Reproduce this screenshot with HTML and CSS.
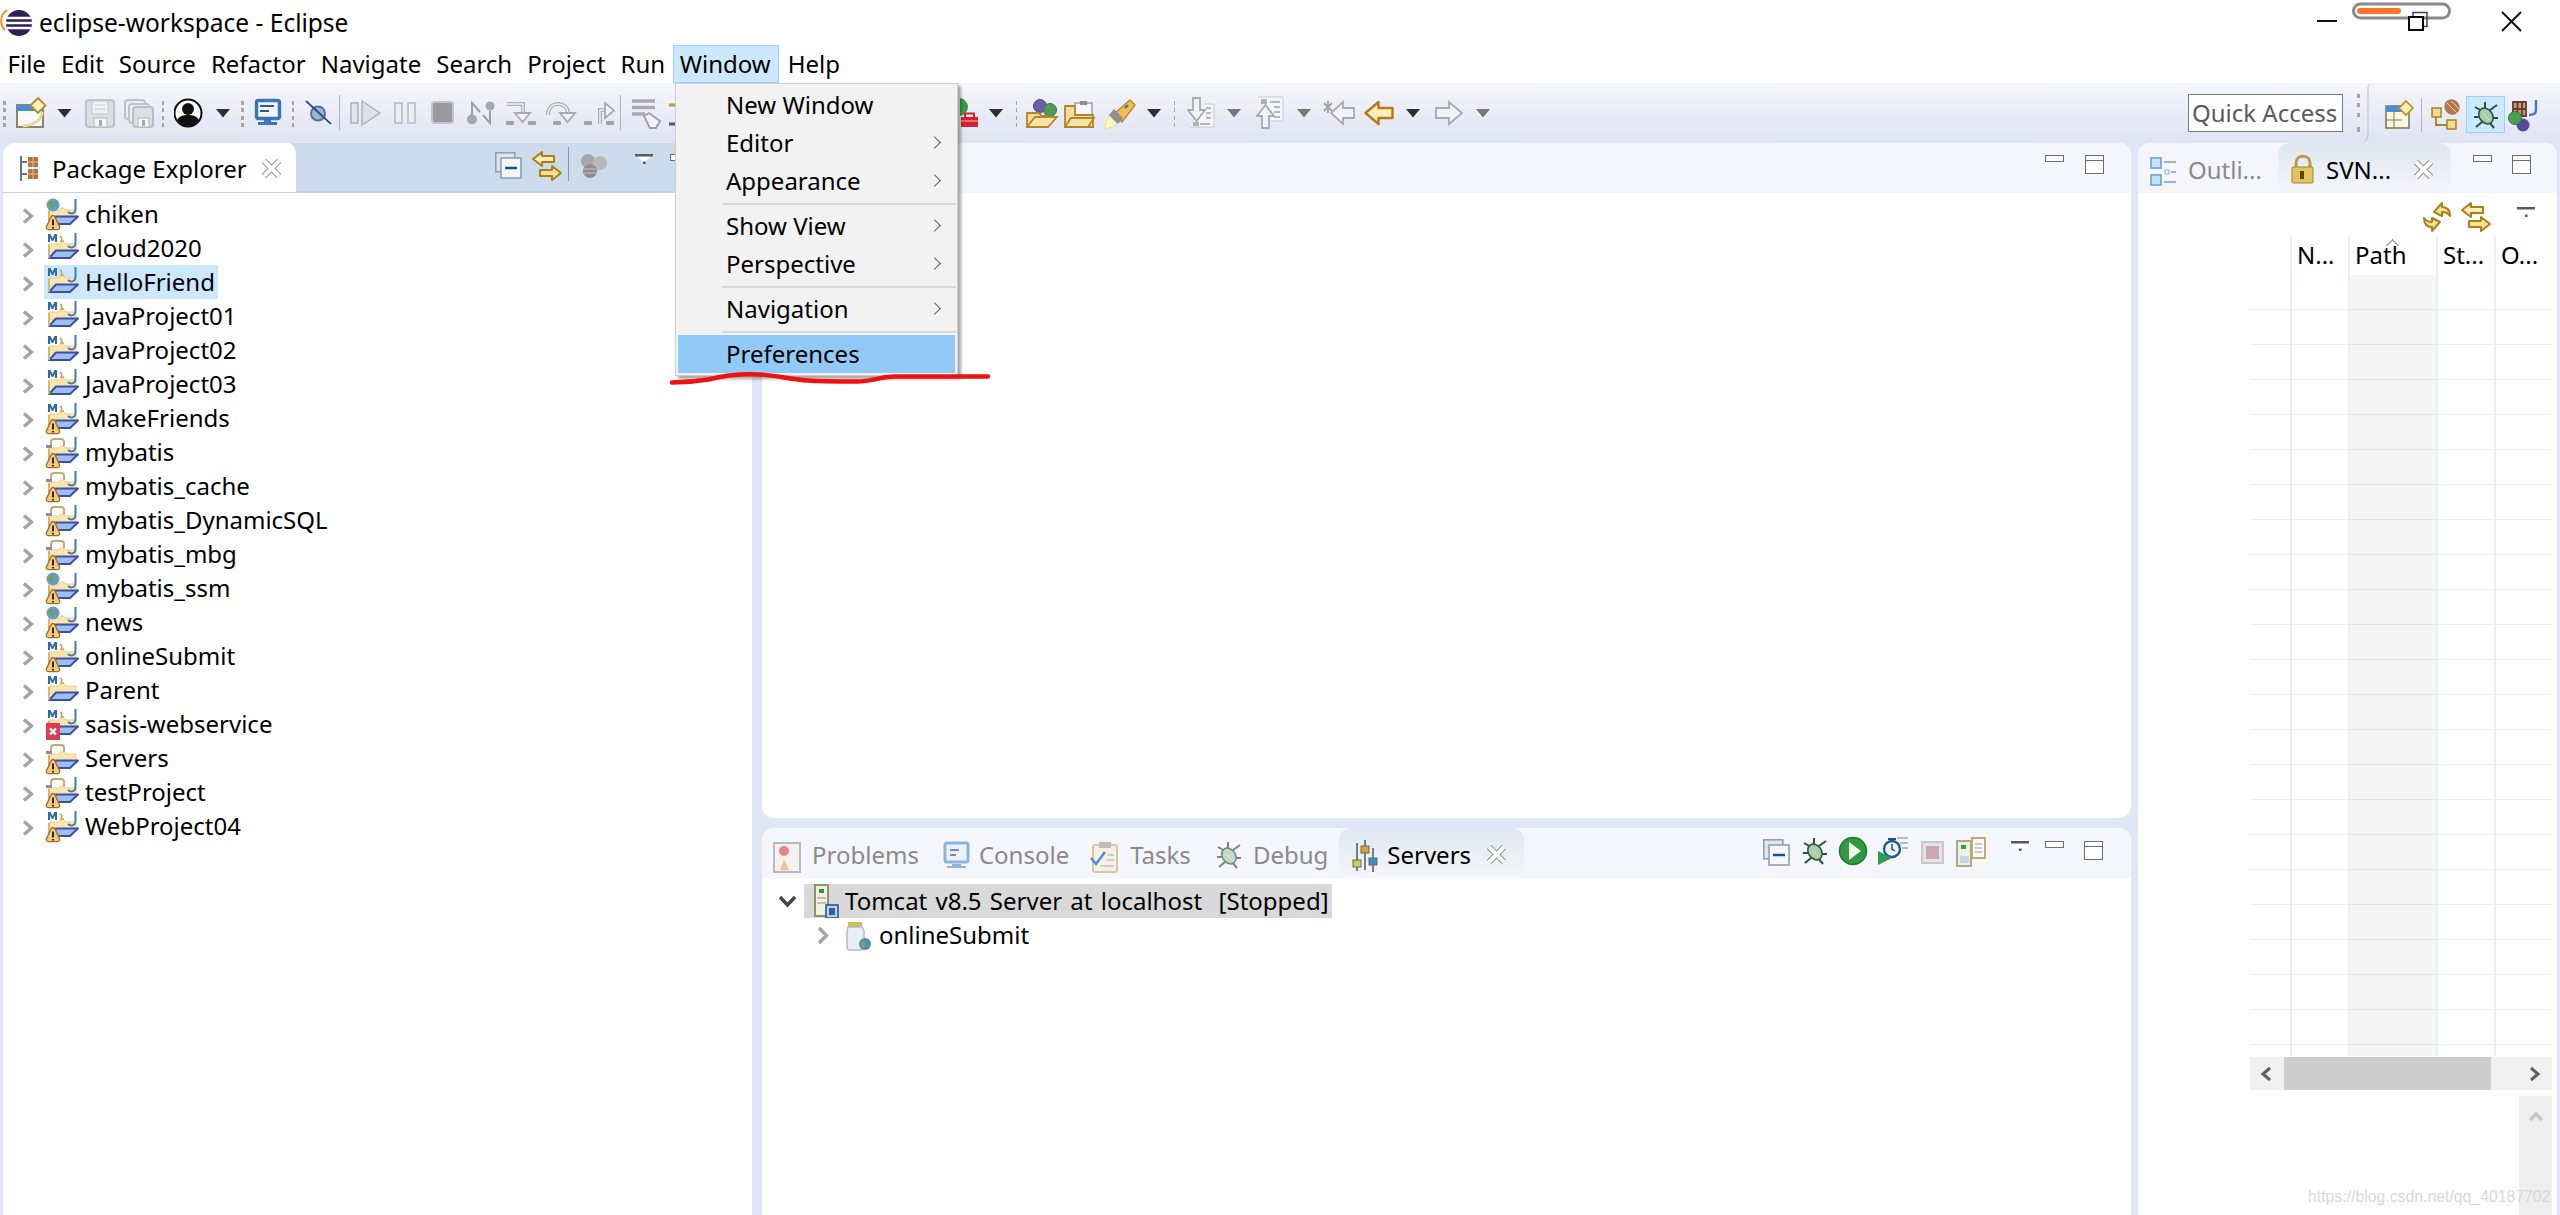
FILE: index.html
```html
<!DOCTYPE html>
<html lang="en">
<head>
<meta charset="utf-8">
<title>eclipse-workspace - Eclipse</title>
<link rel="stylesheet" href="styles.css">
</head>
<body>
<svg class="defs" width="0" height="0" aria-hidden="true">
  <defs>
    <symbol id="chev" viewBox="0 0 12 16"><polyline points="2,1.5 9.5,8 2,14.5" fill="none" stroke="#a4a4a4" stroke-width="3.4"/></symbol>
    <g id="folder">
      <path d="M3 13h9l3-2h2l3 2h10v8H3z" fill="#fbe6ae" stroke="#e8cf93" stroke-width="1"/>
      <path d="M3 27 10 19.500H32L24 27z" fill="#9dc0f0" stroke="#3c4fa6" stroke-width="2" stroke-linejoin="round"/>
      <path d="M3 14v13" stroke="#d4b673" stroke-width="2"/>
    </g>
    <path id="j" d="M29.500 2v10c0 3-2 4.500-4 4.500-1.500 0-2.500-.5-3.500-1.500" fill="none" stroke="#3f7cb4" stroke-width="2"/>
    <g id="m"><path d="M2 11V3h2.500l2 4 2-4H11v8H9V6.500L7.200 10H5.800L4 6.500V11z" fill="#2d6da3"/><path d="M14 5c2 1 2 3 1 5h3" fill="none" stroke="#c9a45c" stroke-width="1.600"/></g>
    <g id="globe"><circle cx="7" cy="8" r="6.500" fill="#5d9fc9"/><path d="M3 5c3-2 5-1 6 1s-2 2-2 5c-3 0-5-3-4-6z" fill="#6f9f5c"/><path d="M9 3c2 1 3 3 3 5l-3-1z" fill="#8a8aa8"/></g>
    <g id="bag"><path d="M5 11V7c0-2 1-3 3-3h7c2 0 3 1 3 3v4" fill="none" stroke="#c5a877" stroke-width="2"/><path d="M0 10h6v3H0z" fill="#8f8aa0"/></g>
    <g id="warn"><path d="M7 18.500c1 0 1.600.7 2 1.600l4.500 9.500c.7 1.700-.3 3-1.800 3H2.300C.8 32.600-.2 31.300.5 29.600L5 20.100c.4-.9 1-1.600 2-1.600z" fill="#f1cc80" stroke="#a96a1c" stroke-width="1.300"/><path d="M7 22.500v6M7 30v1.500" stroke="#2b2b2b" stroke-width="2"/></g>
    <g id="err"><rect x="0" y="16" width="14" height="17" fill="#dc3c50"/><path d="M4 21.500l6 6M10 21.500l-6 6" stroke="#fff" stroke-width="2.400"/></g>
    <g id="grip" fill="#aaa49a"><rect x="0" y="3" width="3" height="4"/><rect x="0" y="10" width="3" height="4"/><rect x="0" y="18" width="3" height="4"/><rect x="0" y="25" width="3" height="4"/></g>
    <path id="arr" d="M0 0h14l-7 8.500z" fill="#2e2e2e"/>
    <path id="arrg" d="M0 0h14l-7 8.500z" fill="#777"/>
    <g id="xclose" fill="none"><path d="M2 2l15 15M17 2L2 17" stroke="#7e7e7e" stroke-width="6"/><path d="M2 2l15 15M17 2L2 17" stroke="#fff" stroke-width="4.200"/></g>
    <g id="collapse"><rect x=".8" y=".8" width="19" height="19" fill="#dfe6f0" stroke="#8ea0b5" stroke-width="1.600"/><rect x="6" y="6" width="20" height="20" fill="#f4f8fc" stroke="#8ea0b5" stroke-width="1.600"/><path d="M10 16h12" stroke="#14558f" stroke-width="2.600"/></g>
    <g id="link" stroke="#b07e16" stroke-width="2" stroke-linejoin="round"><path d="M1 8l9-7v4h12v6H10v4z" fill="#fbeeb8"/><path d="M29 22l-9-7v4H8v6h12v4z" fill="#f8e39b"/></g>
    <g id="vmenu"><path d="M2 2h14l-7 7z" fill="#fff"/><path d="M0 0h18v2.500H0z" fill="#5a5a5a"/><rect x="8" y="7.500" width="2.500" height="2.500" fill="#5a5a5a"/></g>
    <g id="minb"><rect x=".5" y=".5" width="18" height="6" fill="#fff" stroke="#6d6d6d"/></g>
    <g id="maxb"><rect x=".5" y=".5" width="18" height="18" fill="#fff" stroke="#6d6d6d"/><path d="M0 5.500h19" stroke="#6d6d6d"/></g>
    <g id="bug"><path d="M1 5l7 4M23 3l-7 5M0 15h6M24 16h-6M2 25l6-5M20 26l-5-6M11 0v6" stroke="#274f44" stroke-width="2" fill="none"/><ellipse cx="12" cy="14" rx="6.500" ry="8.500" fill="#a9cda6" stroke="#274f44" stroke-width="1.500" transform="rotate(-35 12 14)"/><path d="M9 12l6 6" stroke="#d5e8c0"/></g>
    <g id="dash"><rect width="8" height="4" rx="1" fill="#a0a2a8"/></g>
  </defs>
</svg>

<div class="window">
  <header class="titlebar">
    <svg class="tlogo" width="39" height="45" viewBox="0 0 39 45"><circle cx="19" cy="23" r="13" fill="#2c2255"/><path d="M7 10a13 13 0 0 0-2 20" fill="none" stroke="#f7941e" stroke-width="2"/><path d="M7 18h24M6 23h26M7 28h24" stroke="#fff" stroke-width="2.400"/></svg>
    <span class="ttext">eclipse-workspace - Eclipse</span>
    <svg class="wctl" width="250" height="45" viewBox="2310 0 250 45">
      <path d="M2317 21h20" stroke="#111" stroke-width="2"/>
      <rect x="2353.500" y="4" width="96" height="14" rx="7" fill="#fff" stroke="#8a8a8a" stroke-width="3"/>
      <rect x="2357" y="8" width="44" height="6" rx="3" fill="#fb7524"/>
      <rect x="2413" y="12.500" width="14" height="14" fill="none" stroke="#444" stroke-width="1.500"/>
      <rect x="2409" y="17" width="14" height="13" fill="#fff" stroke="#000" stroke-width="2"/>
      <path d="M2502 12l19 19M2521 12l-19 19" stroke="#111" stroke-width="2"/>
    </svg>
  </header>

  <nav class="menubar">
    <span class="mi">File</span><span class="mi">Edit</span><span class="mi">Source</span><span class="mi">Refactor</span><span class="mi">Navigate</span><span class="mi">Search</span><span class="mi">Project</span><span class="mi">Run</span><span class="mi active">Window</span><span class="mi">Help</span>
  </nav>

  <div class="toolbar">
    <svg width="16" height="36" viewBox="0 94 16 36"><use href="#grip" x="3" y="98"/></svg>
    <svg width="41" height="36" viewBox="16 94 41 36"><rect x="17" y="105" width="26" height="22" fill="#f6f8fd" stroke="#8a8668" stroke-width="2"/><rect x="17" y="105" width="26" height="6" fill="#4a8ecf"/><path d="M42 112c0 8-8 13-19 14" fill="none" stroke="#f0d98f" stroke-width="3"/><path d="M38 98l7.500 7.500-7.500 7.500-7.500-7.500z" fill="#fdf3c4" stroke="#b98a1f" stroke-width="1.800"/></svg>
    <svg width="28" height="36" viewBox="57 94 28 36"><use href="#arr" x="57.500" y="109"/></svg>
    <svg width="39" height="36" viewBox="85 94 39 36"><rect x="86" y="100" width="28" height="27" rx="3" fill="#dcdee3" stroke="#c0c1c5" stroke-width="2"/><rect x="92" y="101" width="16" height="13" fill="#eef0f4" stroke="#c5c6cb"/><path d="M95 105h10M95 109h10" stroke="#c8c9ce"/><rect x="94" y="118" width="13" height="9" fill="#f4f5f8" stroke="#b7b9bf"/><rect x="99" y="120" width="3" height="6" fill="#a8a8ac"/></svg>
    <svg width="38" height="36" viewBox="124 94 38 36"><rect x="125" y="100" width="20" height="19" rx="3" fill="#eceef3" stroke="#c0c1c5" stroke-width="2"/><rect x="129" y="104" width="20" height="19" rx="3" fill="#eceef3" stroke="#c0c1c5" stroke-width="2"/><rect x="133" y="107" width="20" height="20" rx="3" fill="#dcdee3" stroke="#bbbcc1" stroke-width="2"/><rect x="138" y="118" width="11" height="9" fill="#f4f5f8" stroke="#b7b9bf"/><rect x="142" y="120" width="3" height="6" fill="#a8a8ac"/></svg>
    <svg width="12" height="36" viewBox="162 94 12 36"><use href="#grip" x="161" y="98"/></svg>
    <svg width="42" height="36" viewBox="174 94 42 36"><circle cx="188" cy="113" r="13.500" fill="#fff" stroke="#111" stroke-width="2"/><circle cx="188" cy="109" r="6" fill="#111"/><path d="M177 120c2-4 6-5 11-5s9 1 11 5c-3 4-7 6-11 6s-8-2-11-6z" fill="#111"/></svg>
    <svg width="25" height="36" viewBox="216 94 25 36"><use href="#arr" x="216" y="109"/></svg>
    <svg width="13" height="36" viewBox="241 94 13 36"><use href="#grip" x="241" y="98"/></svg>
    <svg width="38" height="36" viewBox="254 94 38 36"><rect x="256.500" y="100.500" width="23" height="18" rx="2" fill="#f2f5fa" stroke="#3a76b8" stroke-width="3.400"/><path d="M260 106h14M260 111h9" stroke="#2c5f96" stroke-width="2"/><path d="M264 120h7v2h6v3h-19v-3h6z" fill="#3a76b8"/></svg>
    <svg width="13" height="36" viewBox="292 94 13 36"><use href="#grip" x="291" y="98"/></svg>
    <svg width="45" height="36" viewBox="305 94 45 36"><path d="M306 101l25 23" stroke="#fff" stroke-width="4"/><circle cx="318" cy="113.500" r="7" fill="#9bb7d4" stroke="#5f6f8c" stroke-width="2"/><path d="M306 101l25 23" stroke="#2d4f97" stroke-width="2"/><path d="M339.500 95v36" stroke="#adb2bf"/></svg>
    <svg width="44" height="36" viewBox="350 94 44 36"><rect x="351" y="103" width="7" height="20" fill="#e2e4ea" stroke="#aeb1ba" stroke-width="1.500"/><path d="M362 101l18 12-18 12z" fill="#dfe1e8" stroke="#aeb1ba" stroke-width="1.500"/></svg>
    <svg width="37" height="36" viewBox="394 94 37 36"><rect x="395" y="103" width="7" height="20" fill="#eceef2" stroke="#b6b9c1" stroke-width="1.500"/><rect x="408" y="103" width="7" height="20" fill="#eceef2" stroke="#b6b9c1" stroke-width="1.500"/></svg>
    <svg width="36" height="36" viewBox="431 94 36 36"><rect x="432" y="102" width="21" height="21" rx="3" fill="#9a9a9e" stroke="#c2c3c8" stroke-width="2"/></svg>
    <svg width="39" height="36" viewBox="467 94 39 36"><circle cx="472" cy="119.500" r="5" fill="#a8a8ac"/><circle cx="490" cy="106" r="4.500" fill="#a8a8ac"/><path d="M472 115v-12l8 9M483 115l7 8v-12" fill="none" stroke="#9d9da2" stroke-width="2"/></svg>
    <svg width="39" height="36" viewBox="506 94 39 36"><path d="M507 104h16v9" fill="none" stroke="#aeb0b6" stroke-width="4"/><path d="M507 104h16v9" fill="none" stroke="#f0f1f4" stroke-width="1.400"/><path d="M515 113h15l-7.500 9z" fill="#f2f3f6" stroke="#a8aab0" stroke-width="1.800"/><use href="#dash" x="506" y="121"/><use href="#dash" x="528" y="121"/></svg>
    <svg width="39" height="36" viewBox="545 94 39 36"><path d="M548 115c0-7 4-11 10-11s10 4 10 9" fill="none" stroke="#aeb0b6" stroke-width="4"/><path d="M548 115c0-7 4-11 10-11s10 4 10 9" fill="none" stroke="#f0f1f4" stroke-width="1.400"/><path d="M560 113h15l-7.500 9z" fill="#f2f3f6" stroke="#a8aab0" stroke-width="1.800"/><use href="#dash" x="553" y="121"/></svg>
    <svg width="47" height="36" viewBox="584 94 47 36"><path d="M600 124v-14h6" fill="none" stroke="#aeb0b6" stroke-width="4"/><path d="M600 124v-14h6" fill="none" stroke="#f0f1f4" stroke-width="1.400"/><path d="M605 103l9 7.500-9 7.500z" fill="#f2f3f6" stroke="#a8aab0" stroke-width="1.800"/><use href="#dash" x="584" y="121"/><use href="#dash" x="606" y="121"/><path d="M620.500 95v36" stroke="#adb2bf"/></svg>
    <svg width="37" height="36" viewBox="631 94 37 36"><path d="M632 101h23M632 107.500h23M632 114h13" stroke="#a8aab0" stroke-width="3.500"/><path d="M644 116l5-3 11 8-4 7h-6z" fill="#f2f3f6" stroke="#9da0a7" stroke-width="1.800"/></svg>
    <svg width="292" height="36" viewBox="668 94 292 36"><path d="M669 105h6" stroke="#c49b3c" stroke-width="3"/><path d="M669 124h6" stroke="#3a5f90" stroke-width="3"/></svg>
    <svg width="29" height="36" viewBox="960 94 29 36"><circle cx="959" cy="107" r="9" fill="#3a9a46"/><rect x="961" y="117" width="17" height="10" fill="#d6212f"/><rect x="965" y="113.500" width="9" height="5" fill="none" stroke="#d6212f" stroke-width="2"/><path d="M961 121h17" stroke="#f9b4b4"/></svg>
    <svg width="27" height="36" viewBox="989 94 27 36"><use href="#arr" x="989" y="109"/></svg>
    <svg width="10" height="36" viewBox="1016 94 10 36"><use href="#grip" x="1014" y="98"/></svg>
    <svg width="38" height="36" viewBox="1026 94 38 36"><circle cx="1040" cy="106" r="6.500" fill="#6d5fa8" stroke="#4a3f80"/><circle cx="1050" cy="110" r="6.500" fill="#4f9b57" stroke="#2f7a39"/><path d="M1027 127v-14h12l3 3h6v11z" fill="#f7dc9b" stroke="#b5842a" stroke-width="1.800"/><path d="M1027 127l8-10h22l-9 10z" fill="#fbe3a8" stroke="#b5842a" stroke-width="1.800"/></svg>
    <svg width="40" height="36" viewBox="1064 94 40 36"><rect x="1075" y="103" width="17" height="12" fill="#f5f7fb" stroke="#9aa3b0" stroke-width="1.500"/><rect x="1080" y="101" width="7" height="4" fill="#8a8f99"/><path d="M1065 127v-21h10v9h18v12z" fill="#f7dc9b" stroke="#b5842a" stroke-width="1.800"/><path d="M1065 127l6-9h23l-6 9z" fill="#fbe3a8" stroke="#b5842a" stroke-width="1.800"/></svg>
    <svg width="43" height="36" viewBox="1104 94 43 36"><path d="M1130 100l5 5-13 17-8-8z" fill="#f2bf55" stroke="#c08a2a" stroke-width="1.500"/><path d="M1114 109l9 9-5 6-9-9z" fill="#8f8f92"/><path d="M1109 116l8 8c-4 3-8 4-12 5 0-5 1-9 4-13z" fill="#fff6c0" stroke="#f0dc90"/><path d="M1125 108l3-3" stroke="#3a6fb0" stroke-width="2.400"/></svg>
    <svg width="27" height="36" viewBox="1147 94 27 36"><use href="#arr" x="1147" y="109"/></svg>
    <svg width="13" height="36" viewBox="1174 94 13 36"><use href="#grip" x="1172" y="98"/></svg>
    <svg width="40" height="36" viewBox="1187 94 40 36"><path d="M1204 104h10v23h-24" fill="#f4f5f8" stroke="#c8cad0"/><path d="M1206 108h5M1206 113h5M1206 118h5M1200 124h10" stroke="#b4b6bc" stroke-width="2"/><rect x="1193" y="122" width="6" height="4" fill="#aeb0b6"/><path d="M1193 98h7v12h5l-8.500 11-8.500-11h5z" fill="#f2f3f6" stroke="#a8aab0" stroke-width="1.800"/></svg>
    <svg width="29" height="36" viewBox="1227 94 29 36"><use href="#arrg" x="1227" y="109"/></svg>
    <svg width="41" height="36" viewBox="1256 94 41 36"><path d="M1258 97h25v24h-12" fill="#f4f5f8" stroke="#c8cad0"/><path d="M1270 102h10M1274 107h6M1274 112h6M1274 117h6" stroke="#b4b6bc" stroke-width="2"/><rect x="1261" y="99" width="6" height="5" fill="#aeb0b6"/><path d="M1262 128v-12h-5l8.500-11 8.500 11h-5v12z" fill="#f2f3f6" stroke="#a8aab0" stroke-width="1.800"/></svg>
    <svg width="26" height="36" viewBox="1297 94 26 36"><use href="#arrg" x="1297" y="109"/></svg>
    <svg width="41" height="36" viewBox="1323 94 41 36"><path d="M1331 113l12-11v6h11v10h-11v6z" fill="#f2f3f6" stroke="#a8aab0" stroke-width="1.800"/><path d="M1324 103l8 8M1332 103l-8 8M1328 101v12" stroke="#a0a2a8" stroke-width="1.800"/></svg>
    <svg width="42" height="36" viewBox="1364 94 42 36"><path d="M1365.500 113l13-11v6h14v10h-14v6z" fill="#fdf0b8" stroke="#b8791a" stroke-width="2.400" stroke-linejoin="round"/></svg>
    <svg width="29" height="36" viewBox="1406 94 29 36"><use href="#arr" x="1406" y="109"/></svg>
    <svg width="41" height="36" viewBox="1435 94 41 36"><path d="M1462 113l-13-11v6h-13v10h13v6z" fill="#f2f3f6" stroke="#a8aab0" stroke-width="1.800"/></svg>
    <svg width="30" height="36" viewBox="1476 94 30 36"><use href="#arrg" x="1476" y="109"/></svg>
    <div class="quick">Quick Access</div>
    <svg class="persp" width="200" height="59" viewBox="2350 83 200 59">
      <rect x="2357" y="94" width="3" height="4" fill="#aaa49a"/><rect x="2357" y="103" width="3" height="4" fill="#aaa49a"/><rect x="2357" y="113" width="3" height="4" fill="#aaa49a"/><rect x="2357" y="127" width="3" height="5" fill="#aaa49a"/>
      <path d="M2370 84c-2 2-2 3-2 5v46c0 3-1 5-3 6" fill="none" stroke="#b8bdca"/>
      <rect x="2386" y="106" width="23" height="22" fill="#fff8df" stroke="#7d7a5c" stroke-width="1.600"/><rect x="2386" y="106" width="23" height="6" fill="#4a8ecf"/><path d="M2394 112v16M2386 120h16" stroke="#7d7a5c"/><path d="M2406 101l7 7-7 7-7-7z" fill="#fbeeb5" stroke="#b98a1f" stroke-width="1.600"/>
      <path d="M2421.500 98v34" stroke="#adb2bf"/>
      <rect x="2432" y="108" width="9" height="9" fill="#f5d98c" stroke="#a88125" stroke-width="1.500"/><rect x="2447" y="120" width="9" height="9" fill="#f5d98c" stroke="#a88125" stroke-width="1.500"/><path d="M2436 117v8h11" fill="none" stroke="#a88125" stroke-width="1.800"/><ellipse cx="2452" cy="107" rx="7.500" ry="8" fill="#b07a4e" transform="rotate(-40 2452 107)"/><path d="M2447 103l10 10M2451 101l8 8" stroke="#e8c9a8"/>
      <rect x="2466.500" y="96.500" width="38" height="36" fill="#cce8ff" stroke="#99d1ff"/>
      <use href="#bug" x="2474" y="102"/>
      <path d="M2513 102h13v14h-13zM2517.500 102v14M2522 102v14M2513 109h13" fill="#c89a7e" stroke="#6a3b2a" stroke-width="1.800"/>
      <path d="M2536 100v10c0 3-2 5-7 5" fill="none" stroke="#3f7cb4" stroke-width="2.400"/>
      <circle cx="2523" cy="125" r="6.500" fill="#56489a"/><circle cx="2515" cy="118" r="6.500" fill="#4aa156" stroke="#2f7a39"/>
    </svg>
  </div>

  <main class="workbench">
    <section class="panel left">
      <div class="phead blue">
        <div class="tab first">
          <svg width="49" height="50" viewBox="3 143 49 50"><path d="M21 157v25M21 163h6M21 175h6" stroke="#6b7280" stroke-width="2" fill="none"/><rect x="28" y="158" width="10" height="10" fill="#b5733d"/><rect x="28" y="170" width="10" height="10" fill="#b5733d"/><path d="M33 158v10M28 163h10M33 170v10M28 175h10" stroke="#eec694"/></svg>
          <span class="tabt">Package Explorer</span>
          <svg class="push" width="44" height="50" viewBox="252 143 44 50"><use href="#xclose" x="262" y="160"/></svg>
        </div>
        <svg class="tools" width="190" height="50" viewBox="490 143 190 50">
          <use href="#collapse" x="495" y="153"/>
          <use href="#link" x="532" y="152"/>
          <path d="M568.500 148v34" stroke="#8a94a4"/>
          <circle cx="588" cy="162" r="7" fill="#a8a8a8"/><circle cx="600" cy="164" r="7" fill="#b8b8b8"/><circle cx="590" cy="172" r="7" fill="#8e8e8e"/><path d="M584 170h12M584 174h12" stroke="#c4c4c4"/>
          <use href="#vmenu" x="635" y="155"/>
          <rect x="670.500" y="155.500" width="18" height="6" fill="#fff" stroke="#6d6d6d"/>
        </svg>
      </div>
      <div class="tree">
        <div class="row"><svg class="cv"><use href="#chev" x="19" y="11" width="12" height="16"/></svg><div class="node"><svg class="ic" viewBox="-2 0 41 34"><use href="#folder"/><use href="#globe"/><use href="#j"/><use href="#warn"/></svg><span>chiken</span></div></div>
        <div class="row"><svg class="cv"><use href="#chev" x="19" y="11" width="12" height="16"/></svg><div class="node"><svg class="ic" viewBox="-2 0 41 34"><use href="#folder"/><use href="#m"/><use href="#j"/></svg><span>cloud2020</span></div></div>
        <div class="row"><svg class="cv"><use href="#chev" x="19" y="11" width="12" height="16"/></svg><div class="node sel"><svg class="ic" viewBox="-2 0 41 34"><use href="#folder"/><use href="#m"/><use href="#j"/></svg><span>HelloFriend</span></div></div>
        <div class="row"><svg class="cv"><use href="#chev" x="19" y="11" width="12" height="16"/></svg><div class="node"><svg class="ic" viewBox="-2 0 41 34"><use href="#folder"/><use href="#m"/><use href="#j"/></svg><span>JavaProject01</span></div></div>
        <div class="row"><svg class="cv"><use href="#chev" x="19" y="11" width="12" height="16"/></svg><div class="node"><svg class="ic" viewBox="-2 0 41 34"><use href="#folder"/><use href="#m"/><use href="#j"/></svg><span>JavaProject02</span></div></div>
        <div class="row"><svg class="cv"><use href="#chev" x="19" y="11" width="12" height="16"/></svg><div class="node"><svg class="ic" viewBox="-2 0 41 34"><use href="#folder"/><use href="#m"/><use href="#j"/></svg><span>JavaProject03</span></div></div>
        <div class="row"><svg class="cv"><use href="#chev" x="19" y="11" width="12" height="16"/></svg><div class="node"><svg class="ic" viewBox="-2 0 41 34"><use href="#folder"/><use href="#m"/><use href="#j"/><use href="#warn"/></svg><span>MakeFriends</span></div></div>
        <div class="row"><svg class="cv"><use href="#chev" x="19" y="11" width="12" height="16"/></svg><div class="node"><svg class="ic" viewBox="-2 0 41 34"><use href="#folder"/><use href="#bag"/><use href="#j"/><use href="#warn"/></svg><span>mybatis</span></div></div>
        <div class="row"><svg class="cv"><use href="#chev" x="19" y="11" width="12" height="16"/></svg><div class="node"><svg class="ic" viewBox="-2 0 41 34"><use href="#folder"/><use href="#bag"/><use href="#j"/><use href="#warn"/></svg><span>mybatis_cache</span></div></div>
        <div class="row"><svg class="cv"><use href="#chev" x="19" y="11" width="12" height="16"/></svg><div class="node"><svg class="ic" viewBox="-2 0 41 34"><use href="#folder"/><use href="#bag"/><use href="#j"/><use href="#warn"/></svg><span>mybatis_DynamicSQL</span></div></div>
        <div class="row"><svg class="cv"><use href="#chev" x="19" y="11" width="12" height="16"/></svg><div class="node"><svg class="ic" viewBox="-2 0 41 34"><use href="#folder"/><use href="#bag"/><use href="#j"/><use href="#warn"/></svg><span>mybatis_mbg</span></div></div>
        <div class="row"><svg class="cv"><use href="#chev" x="19" y="11" width="12" height="16"/></svg><div class="node"><svg class="ic" viewBox="-2 0 41 34"><use href="#folder"/><use href="#globe"/><use href="#j"/><use href="#warn"/></svg><span>mybatis_ssm</span></div></div>
        <div class="row"><svg class="cv"><use href="#chev" x="19" y="11" width="12" height="16"/></svg><div class="node"><svg class="ic" viewBox="-2 0 41 34"><use href="#folder"/><use href="#globe"/><use href="#j"/><use href="#warn"/></svg><span>news</span></div></div>
        <div class="row"><svg class="cv"><use href="#chev" x="19" y="11" width="12" height="16"/></svg><div class="node"><svg class="ic" viewBox="-2 0 41 34"><use href="#folder"/><use href="#m"/><use href="#j"/><use href="#warn"/></svg><span>onlineSubmit</span></div></div>
        <div class="row"><svg class="cv"><use href="#chev" x="19" y="11" width="12" height="16"/></svg><div class="node"><svg class="ic" viewBox="-2 0 41 34"><use href="#folder"/><use href="#m"/></svg><span>Parent</span></div></div>
        <div class="row"><svg class="cv"><use href="#chev" x="19" y="11" width="12" height="16"/></svg><div class="node"><svg class="ic" viewBox="-2 0 41 34"><use href="#folder"/><use href="#m"/><use href="#j"/><use href="#err"/></svg><span>sasis-webservice</span></div></div>
        <div class="row"><svg class="cv"><use href="#chev" x="19" y="11" width="12" height="16"/></svg><div class="node"><svg class="ic" viewBox="-2 0 41 34"><use href="#folder"/><use href="#bag"/><use href="#warn"/></svg><span>Servers</span></div></div>
        <div class="row"><svg class="cv"><use href="#chev" x="19" y="11" width="12" height="16"/></svg><div class="node"><svg class="ic" viewBox="-2 0 41 34"><use href="#folder"/><use href="#bag"/><use href="#j"/><use href="#warn"/></svg><span>testProject</span></div></div>
        <div class="row"><svg class="cv"><use href="#chev" x="19" y="11" width="12" height="16"/></svg><div class="node"><svg class="ic" viewBox="-2 0 41 34"><use href="#folder"/><use href="#m"/><use href="#j"/><use href="#warn"/></svg><span>WebProject04</span></div></div>
      </div>
    </section>

    <div class="midcol">
      <section class="panel editor">
        <div class="phead pale">
          <svg class="push" width="91" height="50" viewBox="2040 143 91 50"><use href="#minb" x="2045" y="155"/><use href="#maxb" x="2085" y="155"/></svg>
        </div>
      </section>
      <section class="panel bottom">
        <div class="phead pale">
          <svg width="50" height="50" viewBox="762 828 50 50"><rect x="774" y="843" width="26" height="29" fill="#f5f1ee" stroke="#b8b8c0" stroke-width="2"/><circle cx="784" cy="851" r="5" fill="#e4868a"/><path d="M780 870l4-11 5 11z" fill="#f0c58c"/></svg>
          <span class="tabt off">Problems</span>
          <svg width="60" height="50" viewBox="918 828 60 50"><rect x="944" y="843" width="23" height="19" rx="2" fill="#eef2f8" stroke="#8eb4dc" stroke-width="3"/><path d="M949 850h9M949 855h6" stroke="#6a8fb6" stroke-width="2"/><path d="M951 864h9v2h5v2h-19v-2h5z" fill="#8eb4dc"/></svg>
          <span class="tabt off">Console</span>
          <svg width="61" height="50" viewBox="1068 828 61 50"><rect x="1092" y="845" width="24" height="27" rx="2" fill="#f7efe2" stroke="#d8c6a8" stroke-width="2"/><rect x="1098" y="842" width="12" height="6" fill="#bcbcc0"/><path d="M1090 858l5 6 9-12" fill="none" stroke="#4a90d8" stroke-width="2.500"/><path d="M1106 855h7M1106 860h7M1100 866h13" stroke="#a8a8a8"/></svg>
          <span class="tabt off">Tasks</span>
          <svg width="62" height="50" viewBox="1189 828 62 50"><g opacity=".65"><use href="#bug" x="1215" y="842"/></g></svg>
          <span class="tabt off">Debug</span>
          <div class="tab serv">
            <svg width="48" height="50" viewBox="1338 828 48 50"><path d="M1356 843v28M1364 840v30M1372 848v24" stroke="#555" stroke-width="1.500"/><rect x="1352" y="860" width="8" height="7" fill="#d2d24a" stroke="#666"/><rect x="1360" y="846" width="8" height="7" fill="#e0a030" stroke="#666"/><rect x="1368" y="858" width="8" height="7" fill="#3a90c0" stroke="#666"/></svg>
            <span class="tabt">Servers</span>
            <svg class="push" width="37" height="50" viewBox="1486 828 37 50"><use href="#xclose" x="1486" y="845"/></svg>
          </div>
          <svg class="push" width="371" height="50" viewBox="1760 828 371 50">
            <use href="#collapse" x="1763" y="839"/>
            <use href="#bug" x="1803" y="838"/>
            <circle cx="1853" cy="851" r="13.500" fill="#2f9a3f" stroke="#1f7a2e" stroke-width="1.500"/><path d="M1849 842l12 9-12 9z" fill="#f2f8e8"/>
            <path d="M1892 839v3M1888 839h8" stroke="#1c4f8c" stroke-width="2"/><circle cx="1892" cy="849" r="8" fill="#f0f5fb" stroke="#1c5a9c" stroke-width="2.400"/><path d="M1892 844v5l3 2" fill="none" stroke="#1c4f8c" stroke-width="1.500"/><path d="M1897 838h11M1900 843h8M1902 848h6" stroke="#a8bcd4" stroke-width="2"/><path d="M1878 851l14 7-14 7z" fill="#2f9a4f"/>
            <rect x="1922" y="842" width="21" height="21" fill="#e4e4e6" stroke="#c8c8cc" stroke-width="2"/><rect x="1926" y="846" width="13" height="13" fill="#c9a8ae"/>
            <rect x="1957" y="841" width="14" height="25" fill="#eef0e4" stroke="#a8ab84" stroke-width="2"/><rect x="1961" y="845" width="5" height="4" fill="#3a9a46"/><rect x="1960" y="856" width="9" height="7" fill="#c8d4e8"/><rect x="1972" y="838" width="13" height="20" fill="#fafafa" stroke="#c6ab68" stroke-width="2"/><path d="M1975 844h7M1975 848h7M1975 852h7" stroke="#7a9cc4"/>
            <use href="#vmenu" x="2011" y="841"/>
            <use href="#minb" x="2045" y="841"/>
            <use href="#maxb" x="2084" y="841"/>
          </svg>
        </div>
        <div class="stree">
          <div class="srow">
            <svg width="42" height="34" viewBox="762 884 42 34"><path d="M780 897l7.500 8 7.500-8" fill="none" stroke="#444" stroke-width="3.400"/></svg>
            <div class="snode">
              <svg width="41" height="34" viewBox="804 884 41 34"><rect x="815" y="885" width="13" height="31" fill="#f3f0df" stroke="#8e9270" stroke-width="2"/><rect x="819" y="889" width="5" height="4" fill="#2a9a3a"/><path d="M817 898h9M817 903h9" stroke="#8e9270"/><rect x="826" y="905" width="12" height="13" fill="#bcd3ee" stroke="#254a8c" stroke-width="1.500"/><rect x="829" y="908" width="6" height="7" fill="#2a5fa8"/></svg>
              <span class="wide">Tomcat v8.5 Server at localhost&nbsp; [Stopped]</span>
            </div>
          </div>
          <div class="srow">
            <svg width="84" height="34" viewBox="762 918 84 34"><path d="M819 928l7.500 7.500-7.500 7.500" fill="none" stroke="#a4a4a4" stroke-width="3.400"/></svg>
            <svg width="33" height="34" viewBox="846 918 33 34"><rect x="848" y="922" width="14" height="5" fill="#d8b95a"/><path d="M848 927h14l2 4v16c0 2-2 3-4 3h-10c-2 0-3-1-3-3v-16z" fill="#e6eef8" stroke="#b0bcc8" stroke-width="1.500"/><circle cx="865" cy="944" r="6" fill="#4f8fb5"/><path d="M861 942c3-1 5 0 5 2s-2 2-2 5c-2 0-4-4-3-7z" fill="#79a653"/></svg>
            <span>onlineSubmit</span>
          </div>
        </div>
      </section>
    </div>

    <section class="panel right">
      <div class="phead pale">
        <svg width="50" height="50" viewBox="2138 143 50 50"><rect x="2151" y="158" width="10" height="10" fill="#c6e0f6" stroke="#7fb0de" stroke-width="2"/><rect x="2151" y="175" width="10" height="10" fill="#c6e0f6" stroke="#7fb0de" stroke-width="2"/><path d="M2164 162h12M2164 182h12" stroke="#9cb2c8" stroke-width="2"/><rect x="2165" y="170" width="4" height="4" fill="none" stroke="#8fb0cc"/><path d="M2171 172h5" stroke="#9cb2c8" stroke-width="2"/></svg>
        <span class="tabt off w-outl">Outli...</span>
        <div class="tab svn">
          <svg width="48" height="50" viewBox="2278 143 48 50"><path d="M2296 168v-5c0-9 14-9 14 0v5" fill="none" stroke="#b89a4a" stroke-width="3"/><rect x="2292" y="167" width="21" height="16" rx="1" fill="#e3c45e" stroke="#a5842c"/><rect x="2300" y="171" width="4" height="8" fill="#5a4512"/></svg>
          <span class="tabt">SVN...</span>
          <svg class="push" width="37" height="50" viewBox="2414 143 37 50"><use href="#xclose" x="2414" y="160"/></svg>
        </div>
        <svg class="push" width="92" height="50" viewBox="2465 143 92 50"><use href="#minb" x="2473" y="155"/><use href="#maxb" x="2512" y="155"/></svg>
      </div>
      <div class="vtools">
        <svg width="118" height="43" viewBox="2420 193 118 43">
          <g fill="#f8e39b" stroke="#b07e16" stroke-width="2" stroke-linejoin="round"><path d="M2434 212l8-9v4c5 0 8 3 8 9-2-3-4-4-8-4v4z"/><path d="M2440 222l-8 9v-4c-5 0-8-3-8-9 2 3 4 4 8 4v-4z"/></g>
          <use href="#link" x="2461" y="202"/>
          <use href="#vmenu" x="2517" y="207"/>
        </svg>
      </div>
      <div class="table">
        <div class="thead">
          <div class="th c1"></div><div class="th c2">N...</div><div class="th c3 sorted">Path</div><div class="th c4">St...</div><div class="th c5">O...</div>
        </div>
        <div class="tbody">
          <div class="td c1"></div><div class="td c2"></div><div class="td c3 shade"></div><div class="td c4"></div><div class="td c5"></div>
        </div>
        <div class="hscroll">
          <svg width="34" height="33" viewBox="0 0 34 33"><path d="M20 11l-7 6 7 6" fill="none" stroke="#606060" stroke-width="3"/></svg>
          <div class="thumb"></div>
          <svg width="61" height="33" viewBox="0 0 61 33"><path d="M40 11l7 6-7 6" fill="none" stroke="#606060" stroke-width="3"/></svg>
        </div>
        <div class="vscroll"><svg width="33" height="38" viewBox="0 0 33 38"><path d="M11 24l6-6 6 6" fill="none" stroke="#c6c6c6" stroke-width="3.400"/></svg></div>
      </div>
    </section>
  </main>

  <div class="menu">
    <div class="item">New Window</div>
    <div class="item sub">Editor</div>
    <div class="item sub">Appearance</div>
    <div class="sep"></div>
    <div class="item sub">Show View</div>
    <div class="item sub">Perspective</div>
    <div class="sep"></div>
    <div class="item sub">Navigation</div>
    <div class="sep"></div>
    <div class="item hot">Preferences</div>
  </div>

  <svg class="redline" width="330" height="20" viewBox="665 370 330 20"><path d="M672 382.500c12 0 24-1 36-3 16-4 34-6 52-5 16 1 32 5 48 6 14 1 28 1 48 1 18 0 24-5 40-5h92" fill="none" stroke="#f01010" stroke-width="4.400" stroke-linecap="round"/></svg>
  <div class="mark">https://blog.csdn.net/qq_40187702</div>
</div>
</body>
</html>
```
FILE: styles.css
```css
* { box-sizing: border-box; }
html, body { margin: 0; padding: 0; background: #fff; }
body { font-family: "Noto Sans", "Open Sans", sans-serif; font-size: 24px; color: #000; overflow: hidden; }
svg { display: block; flex: none; }
.defs { position: absolute; }

.window { position: relative; width: 2560px; height: 1215px; display: flex; flex-direction: column; overflow: hidden; }

.titlebar { height: 45px; display: flex; align-items: center; background: #fff; flex: none; }
.ttext { font-size: 24.5px; }
.wctl { margin-left: auto; }

.menubar { height: 38px; flex: none; display: flex; align-items: center; background: #fff; }
.mi { padding: 0 7.500px; height: 38px; line-height: 37px; }
.mi.active { background: #cce8ff; border: 1px solid #99d1ff; line-height: 35px; padding: 0 7.500px 0 6px; margin-right: 1px; }

.toolbar { height: 59px; flex: none; display: flex; align-items: flex-start; padding-top: 11px; background: linear-gradient(#f5f6fd, #dfe3f1); }
.quick { margin-left: 682px; margin-top: 0; width: 155px; height: 38px; border: 1px solid #7a7a7a; background: #fff; color: #5a5a5a; line-height: 35px; padding-left: 3px; white-space: nowrap; }
.persp { margin-left: 7px; margin-top: -11px; }

.workbench { flex: 1; min-height: 0; display: flex; background: #e0e6f5; padding: 1px 0 0 3px; }
.panel { background: #fff; border-radius: 12px 12px 0 0; display: flex; flex-direction: column; overflow: hidden; }
.left { width: 749px; }
.midcol { width: 1369px; margin-left: 10px; display: flex; flex-direction: column; gap: 10px; }
.editor { height: 675px; flex: none; border-radius: 12px; }
.bottom { flex: 1; }
.right { width: 419px; margin-left: 7px; position: relative; }

.phead { height: 50px; flex: none; display: flex; align-items: center; }
.phead.blue { background: #cddcec; border-bottom: 2px solid #c3d3e5; }
.phead.pale { background: #f4f6fb; }
.push { margin-left: auto; }
.tools { margin-left: 194px; }

.tab { display: flex; align-items: center; height: 50px; border-radius: 12px 12px 0 0; }
.tab.first { width: 293px; background: #fff; }
.tab.serv { width: 185px; margin-left: 11px; background: linear-gradient(#dfe7f0, #f4f6fb); }
.tab.svn { width: 173px; background: linear-gradient(#dfe7f0, #f4f6fb); }
.tabt { white-space: nowrap; padding-top: 2px; }
.tabt.off { color: #8a8a8a; }
.w-outl { width: 90px; }

.tree { padding-top: 4px; }
.row { height: 34px; display: flex; align-items: stretch; }
.cv { width: 41px; height: 34px; }
.node { display: flex; align-items: center; padding-right: 3px; }
.node span, .snode span, .srow > span { padding-bottom: 2px; }
.node.sel { background: #cce8ff; }
.ic { width: 41px; height: 34px; }

.stree { padding-top: 6px; }
.srow { height: 34px; display: flex; align-items: center; }
.snode { display: flex; align-items: center; height: 34px; background: #d9d9d9; padding-right: 3px; }
.wide { word-spacing: 2px; }

.vtools { height: 43px; flex: none; display: flex; justify-content: flex-end; padding-right: 19px; }

.table { margin-left: 112px; width: 302px; flex: 1; display: flex; flex-direction: column; }
.thead { display: flex; height: 39px; flex: none; }
.th { height: 39px; line-height: 38px; padding-left: 5px; position: relative; border-left: 2px solid #eceff4; white-space: nowrap; overflow: hidden; }
.th.c1 { border-left: 0; }
.sorted::before { content: ""; position: absolute; left: 38px; top: 5px; width: 8px; height: 8px; border-left: 1px solid #777; border-top: 1px solid #777; transform: rotate(45deg); }
.c1 { width: 40px; }
.c2 { width: 58px; }
.c3 { width: 88px; }
.c4 { width: 58px; }
.c5 { width: 58px; }
.tbody { display: flex; height: 781px; flex: none; background: repeating-linear-gradient(#fff 0, #fff 34px, #eceef2 34px, #eceef2 35px); }
.td { height: 100%; border-left: 2px solid #e9eef6; }
.td.c1 { border-left: 0; }
.shade { background: rgba(0, 0, 0, .04); }
.hscroll { display: flex; height: 33px; flex: none; background: #f0f0f0; align-items: stretch; margin-top: 1px; }
.thumb { width: 207px; background: #cdcdcd; }
.vscroll { width: 33px; margin-top: 6px; margin-left: auto; flex: 1; background: #eeeeee; }

.menu { position: absolute; left: 675px; top: 83px; width: 283px; height: 293px; background: #f2f2f2; border: 1px solid #cfcfcf; box-shadow: 3px 3px 3px rgba(0, 0, 0, .35); padding-top: 2px; }
.item { height: 38px; line-height: 37px; padding-left: 48px; position: relative; margin: 0 2px 0 2px; }
.item.sub::after { content: ""; position: absolute; right: 16px; top: 14px; width: 8px; height: 8px; border-top: 1.500px solid #555; border-right: 1.500px solid #555; transform: rotate(45deg); }
.item.hot { background: #91c9f7; }
.sep { height: 2px; margin: 3px 1px 2px 46px; background: #d7d7d7; }

.redline { position: absolute; left: 665px; top: 370px; }
.mark { position: absolute; left: 2308px; top: 1188px; font-family: "Liberation Sans", Arial, sans-serif; font-size: 15.800px; color: #d8d8d8; white-space: nowrap; }
```
